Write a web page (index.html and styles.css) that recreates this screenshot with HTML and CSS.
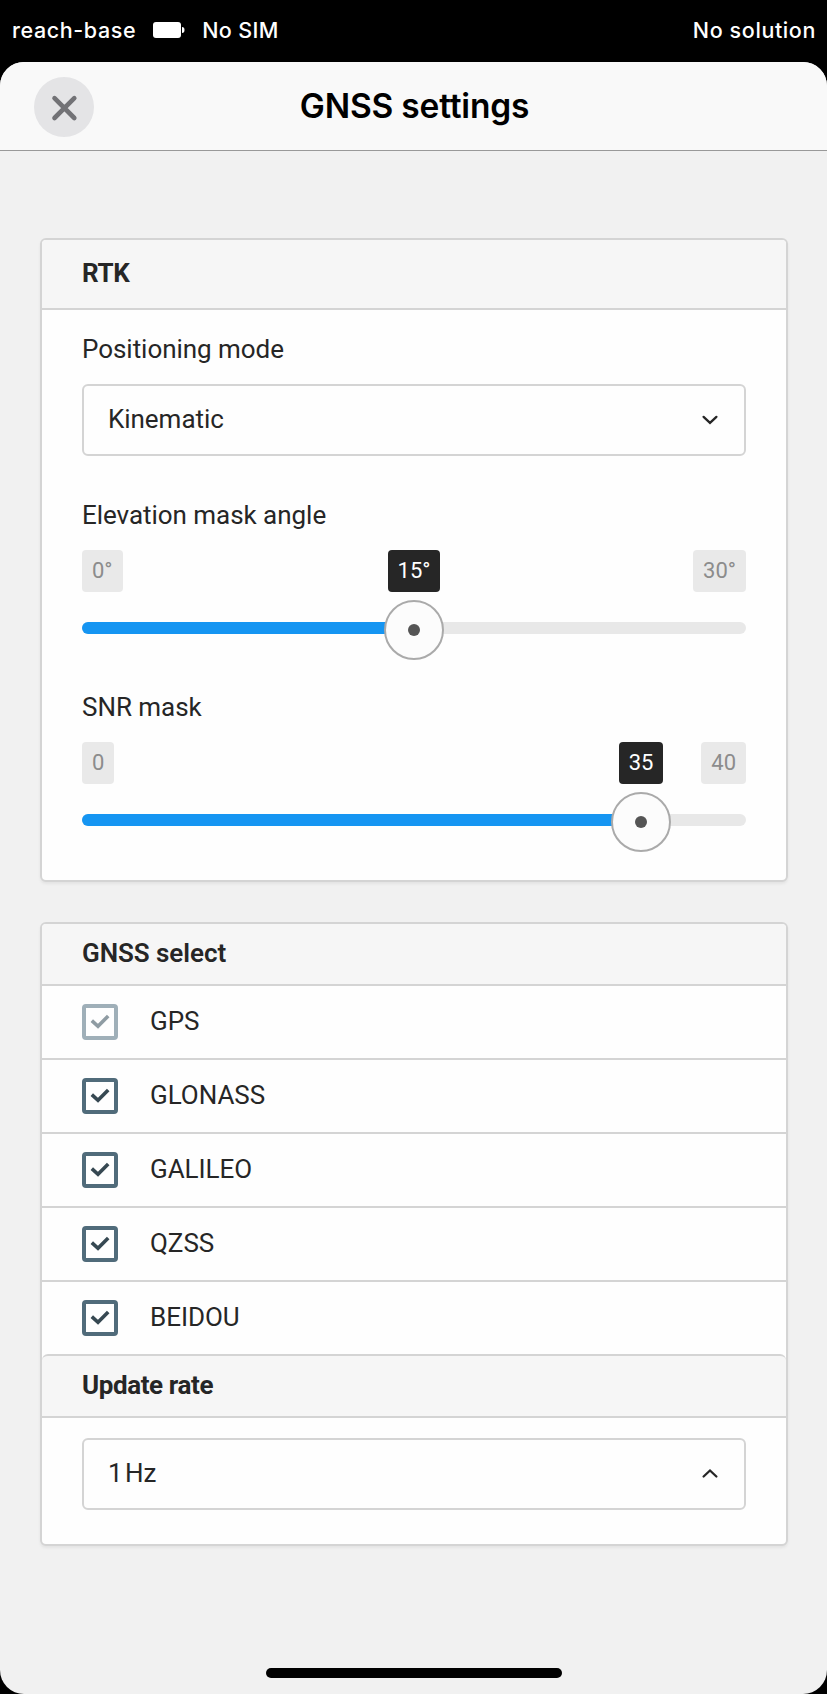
FILE: index.html
```html
<!DOCTYPE html>
<html lang="en">
<head>
<meta charset="utf-8">
<title>GNSS settings</title>
<link rel="stylesheet" href="styles.css">
</head>
<body>
<div class="status-bar">
  <span class="status-name">reach-base</span>
  <svg class="battery" width="32" height="16" viewBox="0 0 32 16"><rect width="28" height="16" rx="3" fill="#fff"/><path d="M29 5a2.5 3 0 0 1 0 6z" fill="#fff"/></svg>
  <span class="status-sim">No SIM</span>
  <span class="status-solution">No solution</span>
</div>
<div class="sheet">
  <header class="sheet-header">
    <button class="close" aria-label="Close"><svg width="60" height="60" viewBox="0 0 60 60"><path d="M20.5 21.2L40.3 41M40.3 21.2L20.5 41" stroke="#727276" stroke-width="4.6" stroke-linecap="round" fill="none"/></svg></button>
    <h1 class="title">GNSS settings</h1>
  </header>
  <main class="content">
    <section class="card">
      <h2 class="card-header card-header-tall">RTK</h2>
      <div class="card-body">
        <div class="label">Positioning mode</div>
        <div class="select"><span>Kinematic</span><svg class="chevron" width="18" height="12" viewBox="0 0 18 12"><path d="M2.6 2.9L9 8.9L15.4 2.9" stroke="#262626" stroke-width="2.3" stroke-linecap="round" fill="none"/></svg></div>
        <div class="label label-slider">Elevation mask angle</div>
        <div class="slider">
          <div class="marks"><span class="mark">0°</span><span class="mark">30°</span></div>
          <div class="track"><div class="fill" style="width:50%"></div></div>
          <div class="handle" style="left:332px"><span class="mark mark-current">15°</span><span class="thumb"></span></div>
        </div>
        <div class="label label-slider">SNR mask</div>
        <div class="slider">
          <div class="marks"><span class="mark">0</span><span class="mark">40</span></div>
          <div class="track"><div class="fill" style="width:84%"></div></div>
          <div class="handle" style="left:559px"><span class="mark mark-current">35</span><span class="thumb"></span></div>
        </div>
      </div>
    </section>
    <section class="card">
      <h2 class="card-header header-medium">GNSS select</h2>
      <ul class="systems">
        <li class="system system-disabled"><span class="checkbox"><svg width="28" height="28" viewBox="0 0 28 28"><path d="M5.8 12.6L12 18.3L22.2 8" stroke="currentColor" stroke-width="3.6" fill="none"/></svg></span><span class="system-name">GPS</span></li>
        <li class="system"><span class="checkbox"><svg width="28" height="28" viewBox="0 0 28 28"><path d="M5.8 12.6L12 18.3L22.2 8" stroke="currentColor" stroke-width="3.6" fill="none"/></svg></span><span class="system-name">GLONASS</span></li>
        <li class="system"><span class="checkbox"><svg width="28" height="28" viewBox="0 0 28 28"><path d="M5.8 12.6L12 18.3L22.2 8" stroke="currentColor" stroke-width="3.6" fill="none"/></svg></span><span class="system-name">GALILEO</span></li>
        <li class="system"><span class="checkbox"><svg width="28" height="28" viewBox="0 0 28 28"><path d="M5.8 12.6L12 18.3L22.2 8" stroke="currentColor" stroke-width="3.6" fill="none"/></svg></span><span class="system-name">QZSS</span></li>
        <li class="system"><span class="checkbox"><svg width="28" height="28" viewBox="0 0 28 28"><path d="M5.8 12.6L12 18.3L22.2 8" stroke="currentColor" stroke-width="3.6" fill="none"/></svg></span><span class="system-name">BEIDOU</span></li>
      </ul>
      <h2 class="card-header card-header-inner">Update rate</h2>
      <div class="card-body card-body-rate">
        <div class="select"><span class="rate-value">1 Hz</span><svg class="chevron" width="18" height="12" viewBox="0 0 18 12"><path d="M2.6 8.5L9 2.5L15.4 8.5" stroke="#262626" stroke-width="2.3" stroke-linecap="round" fill="none"/></svg></div>
      </div>
    </section>
  </main>
  <div class="home-indicator"></div>
</div>
</body>
</html>
```
FILE: styles.css
```css
* { box-sizing: border-box; }
body {
  margin: 0;
  height: 1694px;
  display: flex;
  flex-direction: column;
  background: #000;
  color: #262626;
  font: 26px/30px Roboto, sans-serif;
  letter-spacing: -0.04px;
}
.status-bar {
  height: 62px;
  padding: 0 11px 2px 12px;
  display: flex;
  align-items: center;
  color: #fff;
  font: 500 21.5px/26px Inter, sans-serif;
  letter-spacing: 0.6px;
}
.battery { margin: 0 17px; }
.status-sim { letter-spacing: 0.35px; }
.status-solution { margin-left: auto; }
.sheet {
  flex: 1;
  display: flex;
  flex-direction: column;
  background: #f1f1f1;
  border-radius: 24px;
  overflow: hidden;
}
.sheet-header {
  height: 89px;
  padding: 0 34px;
  display: grid;
  grid-template-columns: 60px 1fr 60px;
  align-items: center;
  background: #f9f9f9;
  border-bottom: 1px solid #999;
}
.close {
  width: 60px;
  height: 60px;
  margin-top: 2px;
  padding: 0;
  border: 0;
  border-radius: 50%;
  background: #e4e4e6;
}
.close svg { display: block; }
.title {
  margin: 0 0 0 2px;
  text-align: center;
  color: #000;
  font: 600 33.5px/40px Inter, sans-serif;
  letter-spacing: -0.2px;
}
.content {
  padding: 87px 39px 0 40px;
  display: flex;
  flex-direction: column;
  gap: 40px;
}
.card {
  background: #fefefe;
  border: 2px solid #d4d4d4;
  border-radius: 6px;
  box-shadow: 0 2px 3px rgba(0, 0, 0, 0.06);
}
.card-header {
  height: 62px;
  margin: 0;
  padding: 0 40px 2px;
  display: flex;
  align-items: center;
  background: #f6f6f6;
  border-bottom: 2px solid #d4d4d4;
  border-radius: 4px 4px 0 0;
  font-size: 26px;
  font-weight: 700;
  letter-spacing: -0.4px;
}
.header-medium {
  font-weight: 600;
  letter-spacing: -0.06px;
}
.card-header-tall { height: 70px; }
.card-header-inner {
  height: 64px;
  border-top: 2px solid #d4d4d4;
  border-radius: 6px 6px 0 0;
}
.card-body { padding: 24px 40px 40px; }
.card-body-rate { padding: 20px 40px 34px; }
.label { height: 50px; }
.label-slider { margin-top: 44px; }
.select {
  height: 72px;
  padding: 0 25px 2px 24px;
  display: flex;
  align-items: center;
  justify-content: space-between;
  border: 2px solid #d4d4d4;
  border-radius: 6px;
}
.rate-value { word-spacing: -4px; }
.chevron { margin-top: 2px; }
.slider {
  position: relative;
  height: 98px;
}
.marks {
  display: flex;
  justify-content: space-between;
  margin-bottom: 30px;
}
.mark {
  height: 42px;
  padding: 0 10px;
  border-radius: 4px;
  background: #e9e9e9;
  color: #8c8c8c;
  font-size: 22px;
  line-height: 41px;
  letter-spacing: 0;
}
.mark-current {
  background: #262626;
  color: #fff;
}
.track {
  height: 12px;
  border-radius: 6px;
  background: #e8e8e8;
  overflow: hidden;
}
.fill {
  height: 100%;
  background: #1595f2;
}
.handle {
  position: absolute;
  top: 0;
  transform: translateX(-50%);
  display: flex;
  flex-direction: column;
  align-items: center;
  gap: 8px;
}
.thumb {
  width: 60px;
  height: 60px;
  display: grid;
  place-items: center;
  border: 2px solid #aaa;
  border-radius: 50%;
  background: #fcfcfc;
}
.thumb::after {
  content: "";
  width: 12px;
  height: 12px;
  border-radius: 50%;
  background: #555;
}
.systems {
  margin: 0;
  padding: 0;
  list-style: none;
}
.system {
  height: 74px;
  padding: 0 40px;
  display: flex;
  align-items: center;
  gap: 32px;
  border-bottom: 2px solid #d4d4d4;
}
.system:last-child {
  height: 72px;
  border-bottom: 0;
}
.system-name { margin-bottom: 2px; }
.checkbox {
  width: 36px;
  height: 36px;
  border: 4px solid #506b7a;
  border-radius: 4px;
  color: #364852;
}
.checkbox svg { display: block; }
.system-disabled .checkbox {
  border-color: #9fafb8;
  color: #8f9ca3;
}
.home-indicator {
  width: 296px;
  height: 10px;
  margin: auto auto 16px;
  border-radius: 5px;
  background: #000;
}
```
